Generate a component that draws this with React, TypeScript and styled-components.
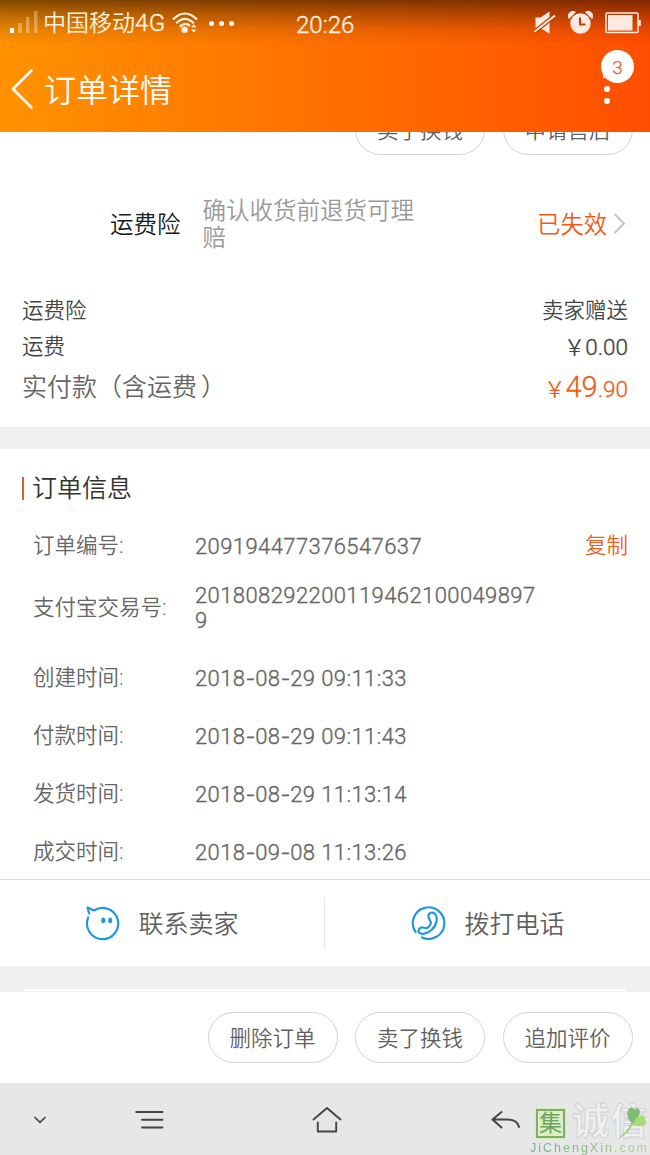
import React from 'react';
import styled, { createGlobalStyle } from 'styled-components';

const GlobalStyle = createGlobalStyle`
  * { box-sizing: border-box; }
  body {
    margin: 0;
    background: #fff;
    font-family: Roboto, 'Noto Sans CJK SC', sans-serif;
    font-weight: 350;
  }
  svg { display: block; flex: none; }
`;

const Screen = styled.main`
  display: flex;
  flex-direction: column;
  width: 650px;
  height: 1155px;
  overflow: hidden;
  background: #fff;
`;

const Text = styled.span<{
  $size: number;
  $color: string;
  $spacing?: number;
}>`
  font-size: ${p => p.$size}px;
  line-height: 32px;
  color: ${p => p.$color};
  letter-spacing: ${p => p.$spacing ?? 0}px;
  white-space: nowrap;
`;

const NumberText = styled(Text)`
  -webkit-text-stroke: 0.35px currentColor;
`;

/* ---------- header ---------- */

const Header = styled.header`
  flex: none;
  height: 132px;
  background:
    linear-gradient(180deg, rgba(0, 0, 0, 0.5) 0, rgba(0, 0, 0, 0.3) 13px, rgba(0, 0, 0, 0.1) 29px, transparent 45px),
    linear-gradient(90deg, #ff9200 0%, #ff7000 50%, #ff4e00 100%);
`;

const StatusBar = styled.div`
  display: grid;
  grid-template-columns: 296px 1fr auto;
  align-items: center;
  height: 46px;
  padding: 0 9px 0 0;
`;

const StatusGroup = styled.div<{ $gap?: number }>`
  display: flex;
  align-items: center;
  gap: ${p => p.$gap ?? 0}px;
`;

const StatusLeft = styled(StatusGroup)`
  padding-left: 10px;
`;

const Carrier = styled(Text)`
  margin: 0 6px 0 5px;
`;

const Network = styled.span`
  font-size: 24px;
  letter-spacing: 0.5px;
  -webkit-text-stroke: 0.35px currentColor;
`;

const Clock = styled(NumberText)`
  padding-top: 3px;
`;

const More = styled.div`
  display: flex;
  gap: 5px;
  margin: 0 0 0 11px;
`;

const Dot = styled.i<{ $size: number }>`
  width: ${p => p.$size}px;
  height: ${p => p.$size}px;
  border-radius: 50%;
  background: #fff;
`;

const TitleBar = styled.div`
  display: flex;
  align-items: center;
  height: 86px;
  padding: 0 16px 0 11px;
`;

const Title = styled.h1`
  flex: 1;
  margin: 3px 0 0 10px;
  color: #fff;
  font-size: 32px;
  line-height: 48px;
  font-weight: 350;
`;

const Menu = styled.div`
  position: relative;
  width: 33px;
  height: 86px;
`;

const MenuDots = styled.div`
  display: flex;
  flex-direction: column;
  gap: 6px;
  padding: 40px 0 0 3px;
`;

const Badge = styled.span`
  position: absolute;
  top: 4px;
  left: 0;
  width: 33px;
  height: 33px;
  border-radius: 50%;
  background: #fff;
  color: #d9683c;
  font-size: 19px;
  line-height: 35px;
  text-align: center;
  -webkit-text-stroke: 0.3px currentColor;

  &::after {
    content: '';
    position: absolute;
    left: 2px;
    bottom: 5px;
    width: 8px;
    height: 8px;
    background: #fff;
  }
`;

/* ---------- content ---------- */

const Pill = styled.button`
  flex: none;
  width: 130px;
  height: 51px;
  padding: 0;
  border: 1px solid #d2d2d2;
  border-radius: 26px;
  background: #fff;
  color: #5f5f5f;
  font: inherit;
  font-size: 21.5px;
  line-height: 51px;
`;

const ClippedActions = styled.div`
  display: flex;
  justify-content: flex-end;
  align-items: flex-end;
  gap: 17.5px;
  height: 23px;
  padding-right: 17.5px;
  overflow: hidden;
`;

const Insurance = styled.section`
  display: flex;
  align-items: center;
  height: 138px;
  padding: 0 24px 0 110px;
`;

const InsuranceText = styled(Text)`
  padding-top: 2px;
`;

const InsuranceNote = styled.p`
  flex: 1;
  margin: 1px 0 0 22px;
  padding-right: 116px;
  color: #999;
  font-size: 23.5px;
  line-height: 27px;
`;

const Fees = styled.section`
  height: 134px;
  padding: 0 22px;
`;

const Between = styled.div<{ $height: number }>`
  display: flex;
  justify-content: space-between;
  align-items: center;
  height: ${p => p.$height}px;
`;

const Price = styled.div`
  display: flex;
  align-items: baseline;
`;

const CloseParen = styled.span`
  margin-left: 4px;
`;

const Band = styled.div<{ $height: number }>`
  flex: none;
  height: ${p => p.$height}px;
  background: #f0f0f0;
`;

const CardEdge = styled.div`
  height: 2px;
  margin: 0 24px;
  background: #fff;
`;

const OrderInfo = styled.section`
  height: 431px;
  border-bottom: 1px solid #dadada;
`;

const SectionTitle = styled.div`
  display: flex;
  align-items: center;
  gap: 8px;
  height: 79px;
  padding-left: 22px;
`;

const Marker = styled.i`
  width: 2px;
  height: 23px;
  background: #e2601f;
`;

const InfoRow = styled.div<{ $height: number; $top?: number }>`
  display: grid;
  grid-template-columns: 162px 345px 1fr;
  align-items: center;
  height: ${p => p.$height}px;
  padding: ${p => p.$top ?? 0}px 22px 0 33px;
`;

const InfoValue = styled.span`
  padding-top: 1px;
  color: #666;
  font-size: 22px;
  line-height: 25.5px;
  letter-spacing: 0.41px;
  overflow-wrap: anywhere;
  -webkit-text-stroke: 0.35px currentColor;
`;

const Dash = styled.span`
  font-family: Inter, sans-serif;
  letter-spacing: -0.2px;
`;

const Copy = styled(Text)`
  text-align: right;
`;

const Contact = styled.section`
  display: flex;
  align-items: center;
  height: 86px;
`;

const ContactItem = styled.div`
  flex: 1;
  display: flex;
  align-items: center;
  justify-content: center;
  gap: 18px;
  height: 52px;

  & + & {
    padding-left: 1px;
    border-left: 1px solid #e8e8e8;
  }
`;

const ContactLabel = styled(Text)`
  padding-top: 3px;
`;

const Actions = styled.footer`
  display: flex;
  justify-content: flex-end;
  gap: 17.5px;
  height: 91px;
  padding: 20px 17.5px 0 0;
`;

/* ---------- system navigation ---------- */

const NavBar = styled.nav`
  position: relative;
  display: flex;
  align-items: center;
  height: 72px;
  padding: 1px 0 0 33px;
  background: #e7e7e7;
`;

const NavSlot = styled.div<{ $width: number }>`
  width: ${p => p.$width}px;
`;

const Watermark = styled.div`
  position: absolute;
  top: 22px;
  left: 530px;
  width: 120px;
  height: 50px;
`;

const MarkRow = styled.div`
  display: flex;
  align-items: center;
  height: 36px;
  padding-left: 6px;
`;

const Seal = styled.span`
  width: 29px;
  height: 29px;
  border: 2px solid #7fae6c;
  outline: 1px solid #d3efb4;
  background: #dcefc4;
  color: #6fa45f;
  font-size: 23px;
  line-height: 25px;
  text-align: center;
  font-weight: 400;
`;

const Brand = styled.span`
  margin-left: 7px;
  color: #f1f1f1;
  font-size: 37px;
  line-height: 36px;
  letter-spacing: 1px;
  font-weight: 700;
  white-space: nowrap;
  -webkit-text-stroke: 0.8px #cfcfd2;
`;

const Leaf = styled.div`
  position: absolute;
  top: 1px;
  left: 88px;
`;

const Domain = styled.div`
  background: linear-gradient(90deg, #74a9a0, #8dbb7c 50%, #b3d58f);
  background-clip: text;
  -webkit-background-clip: text;
  color: transparent;
  font-family: 'Liberation Sans', sans-serif;
  font-size: 12.5px;
  line-height: 14px;
  letter-spacing: 2px;
  font-weight: 400;
  white-space: nowrap;
`;

const INK = '#444';

const SignalIcon = () => (
  <svg width="28" height="24" viewBox="0 0 28 24" fill="#fff">
    <rect x="0" y="17" width="4" height="5" />
    <rect x="8" y="12" width="4" height="10" opacity=".32" />
    <rect x="16" y="6" width="3.5" height="16" opacity=".32" />
    <rect x="24" y="0" width="3.5" height="22" opacity=".32" />
  </svg>
);

const WifiIcon = () => (
  <svg width="26" height="22" viewBox="0 0 26 22" fill="none" stroke="#fff4e4" strokeWidth="2.2">
    <path d="M1 7.5 Q13 -4.5 25 7.5" />
    <path d="M4.2 11.2 Q13 2.4 21.8 11.2" />
    <path d="M7.7 14.8 Q13 9.6 18 13.8" />
    <circle cx="12.6" cy="17.7" r="3.2" fill="#fff4e4" stroke="none" />
    <path d="M19 15.3l2.7-3 2.7 3zM19 17.5l2.7 3 2.7-3z" fill="#fff4e4" stroke="none" />
  </svg>
);

const MuteIcon = () => (
  <svg width="22" height="24" viewBox="0 0 22 24">
    <path d="M1.500 6.500H6.500L15.500 0.500V23L9 18.500L1.500 17Z" fill="#fde9df" />
    <path d="M0.500 20.800L21 4.500" stroke="#b04300" strokeWidth="4.400" />
    <path d="M0.500 20.800L21 4.500" stroke="#fde9df" strokeWidth="2" />
  </svg>
);

const AlarmIcon = () => (
  <svg width="25" height="24" viewBox="0 0 25 24">
    <path d="M1 8A5 5 0 0 1 8 1zM24 8A5 5 0 0 0 17 1z" fill="#fde9df" />
    <circle cx="12.5" cy="12.5" r="10.200" fill="#fde9df" />
    <path d="M12 6.500V13.500H17.500" fill="none" stroke="#b84500" strokeWidth="2" />
  </svg>
);

const BatteryIcon = () => (
  <svg width="36" height="22" viewBox="0 0 36 22">
    <rect x="1" y="1" width="32" height="19.500" rx="1" fill="none" stroke="#fde9df" strokeWidth="1.500" />
    <rect x="3" y="3" width="24.500" height="15.500" fill="#fde9df" />
    <rect x="33.500" y="8" width="2.300" height="6" fill="#fde9df" />
  </svg>
);

const BackIcon = () => (
  <svg width="23" height="40" viewBox="0 0 23 40" fill="none" stroke="#fff" strokeWidth="2.6" strokeLinecap="round" strokeLinejoin="round">
    <path d="M20.500 1.500L2 20L20.500 38.500" />
  </svg>
);

const ArrowRight = () => (
  <svg width="13" height="22" viewBox="0 0 13 22" fill="none" stroke="#c4c4c4" strokeWidth="2">
    <path d="M1.500 1L11 10.500L1.500 20" />
  </svg>
);

const ChatIcon = () => (
  <svg width="35" height="36" viewBox="0 0 35 36" fill="none" stroke="#2098dc" strokeWidth="2.200" strokeLinecap="round" strokeLinejoin="round">
    <path d="M3.200 12.500A15.600 15.600 0 1 0 9 5.500L2.500 2.500L4.200 8.500" />
    <ellipse cx="18.200" cy="15.300" rx="2" ry="2.900" fill="#2098dc" stroke="none" />
    <ellipse cx="25.200" cy="15.300" rx="2" ry="2.900" fill="#2098dc" stroke="none" />
  </svg>
);

const PhoneIcon = () => (
  <svg width="35" height="36" viewBox="0 0 35 36" fill="none" stroke="#2098dc" strokeWidth="2.200" strokeLinecap="round" strokeLinejoin="round">
    <path d="M4.500 27A15.800 15.800 0 1 1 11 32.500" />
    <path d="M17.500 11.500C17 8 21 6.500 23.500 8.500C27.500 12 26 20 20.500 25C16 29 10.500 30 8 27.500C6.500 25 9 22 12 22.500C14 23 15.500 24 17.500 22C20 19.500 20.500 17.500 19 15.500C18 14 17.500 13 17.500 11.500Z" />
  </svg>
);

const HideIcon = () => (
  <svg width="14" height="8" viewBox="0 0 14 8" fill="none" stroke={INK} strokeWidth="1.700">
    <path d="M1.500 1L7 6.300L12.500 1" />
  </svg>
);

const RecentsIcon = () => (
  <svg width="30" height="20" viewBox="0 0 30 20" fill="none" stroke={INK} strokeWidth="2" strokeLinecap="round">
    <path d="M2.200 2H28.500M8 9.700H28.500M8 17.400H28.500" />
  </svg>
);

const HomeIcon = () => (
  <svg width="30" height="28" viewBox="0 0 30 28" fill="none" stroke={INK} strokeWidth="1.900" strokeLinecap="round" strokeLinejoin="round">
    <path d="M1.500 13.500L15 2L28.500 13.500M5.800 16.500V25.500H24.200V16.500" />
  </svg>
);

const ReturnIcon = () => (
  <svg width="30" height="20" viewBox="0 0 30 20" fill="none" stroke={INK} strokeWidth="2" strokeLinecap="round" strokeLinejoin="round">
    <path d="M10.500 2L1.500 9.500L10.500 17.500M2 9.500H16C23 9.500 27 12 28 17" />
  </svg>
);

const LeafIcon = () => (
  <svg width="32" height="34" viewBox="0 0 32 34">
    <path d="M2 31C9 27 13 22 15 14" fill="none" stroke="#9ccf7a" strokeWidth="1.600" />
    <path d="M15 18C8 13 8 4 12 2C14 .5 16 2 16.500 4C19 .5 23 3 21.500 8C20.500 12 18 15 15 18Z" fill="#7fbd76" />
    <path d="M15 19C17 12 22 8 26 10C28 11 27.500 13 26.500 14C30 16 28 20 23 20C20 20.500 17 20 15 19Z" fill="#addb78" />
  </svg>
);

const times = [
  { label: '创建时间:', date: ['2018', '08', '29'], time: '09:11:33' },
  { label: '付款时间:', date: ['2018', '08', '29'], time: '09:11:43' },
  { label: '发货时间:', date: ['2018', '08', '29'], time: '11:13:14' },
  { label: '成交时间:', date: ['2018', '09', '08'], time: '11:13:26' },
];

export default function App() {
  return (
    <Screen>
      <GlobalStyle />
      <Header>
        <StatusBar>
          <StatusLeft>
            <SignalIcon />
            <Carrier $size={23} $color="#fff4e4">中国移动<Network>4G</Network></Carrier>
            <WifiIcon />
            <More>
              <Dot $size={5} />
              <Dot $size={5} />
              <Dot $size={5} />
            </More>
          </StatusLeft>
          <Clock $size={24} $color="#fff4e4">20:26</Clock>
          <StatusGroup $gap={12}>
            <MuteIcon />
            <AlarmIcon />
            <BatteryIcon />
          </StatusGroup>
        </StatusBar>
        <TitleBar>
          <BackIcon />
          <Title>订单详情</Title>
          <Menu>
            <MenuDots>
              <Dot $size={6} />
              <Dot $size={6} />
            </MenuDots>
            <Badge>3</Badge>
          </Menu>
        </TitleBar>
      </Header>

      <ClippedActions>
        <Pill>卖了换钱</Pill>
        <Pill>申请售后</Pill>
      </ClippedActions>

      <Insurance>
        <InsuranceText $size={23.5} $color="#111c26">运费险</InsuranceText>
        <InsuranceNote>确认收货前退货可理赔</InsuranceNote>
        <StatusGroup $gap={6}>
          <InsuranceText $size={23.3} $color="#ef5a14">已失效</InsuranceText>
          <ArrowRight />
        </StatusGroup>
      </Insurance>

      <Fees>
        <Between $height={36}>
          <Text $size={21.5} $color="#444">运费险</Text>
          <Text $size={21.5} $color="#444">卖家赠送</Text>
        </Between>
        <Between $height={36}>
          <Text $size={21.5} $color="#444">运费</Text>
          <Price>
            <Text $size={21.5} $color="#444">￥</Text>
            <NumberText $size={22.5} $color="#444">0.00</NumberText>
          </Price>
        </Between>
        <Between $height={46}>
          <Text $size={25} $color="#666">实付款（含运费<CloseParen>）</CloseParen></Text>
          <Price>
            <Text $size={21.5} $color="#ea5f1c">￥</Text>
            <NumberText $size={29} $color="#ea5f1c">49</NumberText>
            <NumberText $size={22.5} $color="#ea5f1c">.90</NumberText>
          </Price>
        </Between>
      </Fees>

      <Band $height={22} />

      <OrderInfo>
        <SectionTitle>
          <Marker />
          <Text $size={25} $color="#333">订单信息</Text>
        </SectionTitle>
        <InfoRow $height={36}>
          <Text $size={21.5} $color="#666">订单编号:</Text>
          <InfoValue>209194477376547637</InfoValue>
          <Copy $size={21.5} $color="#ea5f1c">复制</Copy>
        </InfoRow>
        <InfoRow $height={85} $top={2}>
          <Text $size={21.5} $color="#666">支付宝交易号:</Text>
          <InfoValue>2018082922001194621000498979</InfoValue>
        </InfoRow>
        {times.map(({ label, date, time }) => (
          <InfoRow key={label} $height={58}>
            <Text $size={21.5} $color="#666">{label}</Text>
            <InfoValue>
              {date[0]}<Dash>-</Dash>{date[1]}<Dash>-</Dash>{date[2]} {time}
            </InfoValue>
          </InfoRow>
        ))}
      </OrderInfo>

      <Contact>
        <ContactItem>
          <ChatIcon />
          <ContactLabel $size={25} $color="#5f5f5f">联系卖家</ContactLabel>
        </ContactItem>
        <ContactItem>
          <PhoneIcon />
          <ContactLabel $size={25} $color="#5f5f5f">拨打电话</ContactLabel>
        </ContactItem>
      </Contact>

      <Band $height={23} />
      <Band $height={3}>
        <CardEdge />
      </Band>

      <Actions>
        <Pill>删除订单</Pill>
        <Pill>卖了换钱</Pill>
        <Pill>追加评价</Pill>
      </Actions>

      <NavBar>
        <NavSlot $width={101}><HideIcon /></NavSlot>
        <NavSlot $width={178}><RecentsIcon /></NavSlot>
        <NavSlot $width={179}><HomeIcon /></NavSlot>
        <NavSlot $width={40}><ReturnIcon /></NavSlot>
        <Watermark>
          <MarkRow>
            <Seal>集</Seal>
            <Brand>诚信</Brand>
          </MarkRow>
          <Domain>JiChengXin.com</Domain>
          <Leaf><LeafIcon /></Leaf>
        </Watermark>
      </NavBar>
    </Screen>
  );
}
